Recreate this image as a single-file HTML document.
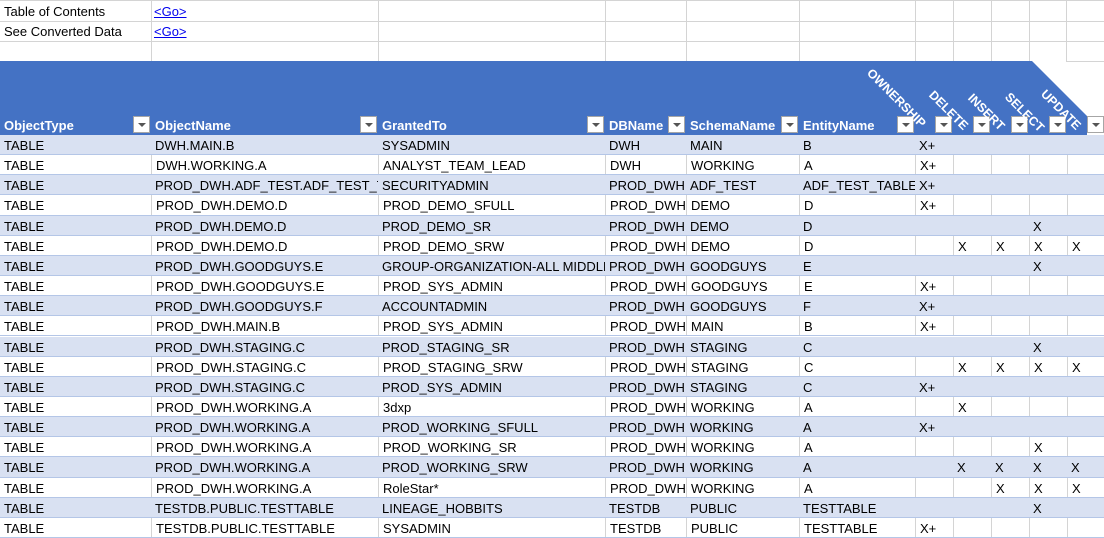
<!DOCTYPE html>
<html><head><meta charset="utf-8">
<style>
*{margin:0;padding:0;box-sizing:border-box}
body{width:1104px;height:537px;overflow:hidden;background:#fff;font-family:"Liberation Sans",sans-serif;font-size:13px;color:#000;position:relative}
.vl{position:absolute;top:0;width:1px;height:61px;background:#d4d4d4}
.hl{position:absolute;left:0;width:1104px;height:1px;background:#d4d4d4}
.t{position:absolute;line-height:20px;white-space:nowrap}
a{color:#0000ee;text-decoration:underline}
.row{position:absolute;left:0;width:1104px;height:20.15px;border-bottom:1px solid #b4c6e7}
.b{background:#d9e1f2}
.row>div{position:absolute;top:0;height:100%;line-height:21px;padding-left:4px;white-space:nowrap;overflow:hidden}
.row:not(.b)>div{border-left:1px solid #d4d4d4}
.c0{left:0;width:151px}.c1{left:151px;width:227px}.c2{left:378px;width:227px}.c3{left:605px;width:81px}.c4{left:686px;width:113px}.c5{left:799px;width:116px}.c6{left:915px;width:38px}.c7{left:953px;width:38px}.c8{left:991px;width:38px}.c9{left:1029px;width:38px}.c10{left:1067px;width:37px}
.row>div.c0{border-left:none!important}
.h{position:absolute;top:116px;color:#fff;font-weight:bold;line-height:19px}
.f{position:absolute;top:116px;width:17px;height:17px;background:#fff;border:1px solid #a6a6a6}
.f:after{content:"";position:absolute;left:4px;top:6px;border-left:4px solid transparent;border-right:4px solid transparent;border-top:4px solid #555}
.r{position:absolute;color:#fff;font-weight:bold;font-size:12.5px;transform:rotate(45deg);transform-origin:0 0;white-space:nowrap}
</style></head><body>
<div class="vl" style="left:151px"></div><div class="vl" style="left:378px"></div><div class="vl" style="left:605px"></div><div class="vl" style="left:686px"></div><div class="vl" style="left:799px"></div><div class="vl" style="left:915px"></div><div class="vl" style="left:953px"></div><div class="vl" style="left:991px"></div><div class="vl" style="left:1029px"></div><div class="vl" style="left:1066px;height:62px"></div>
<div class="hl" style="top:0"></div><div class="hl" style="top:21px"></div><div class="hl" style="top:41px"></div>
<div style="position:absolute;left:1066px;top:61px;width:38px;height:1px;background:#d4d4d4"></div>
<div class="t" style="left:4px;top:2px">Table of Contents</div>
<div class="t" style="left:154px;top:2px"><a>&lt;Go&gt;</a></div>
<div class="t" style="left:4px;top:22px">See Converted Data</div>
<div class="t" style="left:154px;top:22px"><a>&lt;Go&gt;</a></div>
<svg style="position:absolute;left:0;top:0" width="1104" height="537"><polygon points="0,61 1032,61 1087,116 1087,135 0,135" fill="#4472c4"/></svg>
<div class="h" style="left:4px">ObjectType</div><div class="f" style="left:133px"></div>
<div class="h" style="left:155px">ObjectName</div><div class="f" style="left:360px"></div>
<div class="h" style="left:382px">GrantedTo</div><div class="f" style="left:587px"></div>
<div class="h" style="left:609px">DBName</div><div class="f" style="left:668px"></div>
<div class="h" style="left:690px">SchemaName</div><div class="f" style="left:781px"></div>
<div class="h" style="left:803px">EntityName</div><div class="f" style="left:897px"></div>
<div class="f" style="left:935px"></div><div class="f" style="left:973px"></div><div class="f" style="left:1011px"></div><div class="f" style="left:1049px"></div><div class="f" style="left:1087px"></div>
<div class="r" style="left:874px;top:66px">OWNERSHIP</div>
<div class="r" style="left:936px;top:88px">DELETE</div>
<div class="r" style="left:975px;top:91px">INSERT</div>
<div class="r" style="left:1012px;top:90px">SELECT</div>
<div class="r" style="left:1048px;top:87px">UPDATE</div>

<div class="row b" style="top:135px"><div class="c0">TABLE</div><div class="c1">DWH.MAIN.B</div><div class="c2">SYSADMIN</div><div class="c3">DWH</div><div class="c4">MAIN</div><div class="c5">B</div><div class="c6">X+</div><div class="c7"></div><div class="c8"></div><div class="c9"></div><div class="c10"></div></div>
<div class="row" style="top:155.15px"><div class="c0">TABLE</div><div class="c1">DWH.WORKING.A</div><div class="c2">ANALYST_TEAM_LEAD</div><div class="c3">DWH</div><div class="c4">WORKING</div><div class="c5">A</div><div class="c6">X+</div><div class="c7"></div><div class="c8"></div><div class="c9"></div><div class="c10"></div></div>
<div class="row b" style="top:175.3px"><div class="c0">TABLE</div><div class="c1">PROD_DWH.ADF_TEST.ADF_TEST_TABLE</div><div class="c2">SECURITYADMIN</div><div class="c3">PROD_DWH</div><div class="c4">ADF_TEST</div><div class="c5">ADF_TEST_TABLE</div><div class="c6">X+</div><div class="c7"></div><div class="c8"></div><div class="c9"></div><div class="c10"></div></div>
<div class="row" style="top:195.45px"><div class="c0">TABLE</div><div class="c1">PROD_DWH.DEMO.D</div><div class="c2">PROD_DEMO_SFULL</div><div class="c3">PROD_DWH</div><div class="c4">DEMO</div><div class="c5">D</div><div class="c6">X+</div><div class="c7"></div><div class="c8"></div><div class="c9"></div><div class="c10"></div></div>
<div class="row b" style="top:215.6px"><div class="c0">TABLE</div><div class="c1">PROD_DWH.DEMO.D</div><div class="c2">PROD_DEMO_SR</div><div class="c3">PROD_DWH</div><div class="c4">DEMO</div><div class="c5">D</div><div class="c6"></div><div class="c7"></div><div class="c8"></div><div class="c9">X</div><div class="c10"></div></div>
<div class="row" style="top:235.75px"><div class="c0">TABLE</div><div class="c1">PROD_DWH.DEMO.D</div><div class="c2">PROD_DEMO_SRW</div><div class="c3">PROD_DWH</div><div class="c4">DEMO</div><div class="c5">D</div><div class="c6"></div><div class="c7">X</div><div class="c8">X</div><div class="c9">X</div><div class="c10">X</div></div>
<div class="row b" style="top:255.9px"><div class="c0">TABLE</div><div class="c1">PROD_DWH.GOODGUYS.E</div><div class="c2">GROUP-ORGANIZATION-ALL MIDDLE</div><div class="c3">PROD_DWH</div><div class="c4">GOODGUYS</div><div class="c5">E</div><div class="c6"></div><div class="c7"></div><div class="c8"></div><div class="c9">X</div><div class="c10"></div></div>
<div class="row" style="top:276.05px"><div class="c0">TABLE</div><div class="c1">PROD_DWH.GOODGUYS.E</div><div class="c2">PROD_SYS_ADMIN</div><div class="c3">PROD_DWH</div><div class="c4">GOODGUYS</div><div class="c5">E</div><div class="c6">X+</div><div class="c7"></div><div class="c8"></div><div class="c9"></div><div class="c10"></div></div>
<div class="row b" style="top:296.2px"><div class="c0">TABLE</div><div class="c1">PROD_DWH.GOODGUYS.F</div><div class="c2">ACCOUNTADMIN</div><div class="c3">PROD_DWH</div><div class="c4">GOODGUYS</div><div class="c5">F</div><div class="c6">X+</div><div class="c7"></div><div class="c8"></div><div class="c9"></div><div class="c10"></div></div>
<div class="row" style="top:316.35px"><div class="c0">TABLE</div><div class="c1">PROD_DWH.MAIN.B</div><div class="c2">PROD_SYS_ADMIN</div><div class="c3">PROD_DWH</div><div class="c4">MAIN</div><div class="c5">B</div><div class="c6">X+</div><div class="c7"></div><div class="c8"></div><div class="c9"></div><div class="c10"></div></div>
<div class="row b" style="top:336.5px"><div class="c0">TABLE</div><div class="c1">PROD_DWH.STAGING.C</div><div class="c2">PROD_STAGING_SR</div><div class="c3">PROD_DWH</div><div class="c4">STAGING</div><div class="c5">C</div><div class="c6"></div><div class="c7"></div><div class="c8"></div><div class="c9">X</div><div class="c10"></div></div>
<div class="row" style="top:356.65px"><div class="c0">TABLE</div><div class="c1">PROD_DWH.STAGING.C</div><div class="c2">PROD_STAGING_SRW</div><div class="c3">PROD_DWH</div><div class="c4">STAGING</div><div class="c5">C</div><div class="c6"></div><div class="c7">X</div><div class="c8">X</div><div class="c9">X</div><div class="c10">X</div></div>
<div class="row b" style="top:376.8px"><div class="c0">TABLE</div><div class="c1">PROD_DWH.STAGING.C</div><div class="c2">PROD_SYS_ADMIN</div><div class="c3">PROD_DWH</div><div class="c4">STAGING</div><div class="c5">C</div><div class="c6">X+</div><div class="c7"></div><div class="c8"></div><div class="c9"></div><div class="c10"></div></div>
<div class="row" style="top:396.95px"><div class="c0">TABLE</div><div class="c1">PROD_DWH.WORKING.A</div><div class="c2">3dxp</div><div class="c3">PROD_DWH</div><div class="c4">WORKING</div><div class="c5">A</div><div class="c6"></div><div class="c7">X</div><div class="c8"></div><div class="c9"></div><div class="c10"></div></div>
<div class="row b" style="top:417.1px"><div class="c0">TABLE</div><div class="c1">PROD_DWH.WORKING.A</div><div class="c2">PROD_WORKING_SFULL</div><div class="c3">PROD_DWH</div><div class="c4">WORKING</div><div class="c5">A</div><div class="c6">X+</div><div class="c7"></div><div class="c8"></div><div class="c9"></div><div class="c10"></div></div>
<div class="row" style="top:437.25px"><div class="c0">TABLE</div><div class="c1">PROD_DWH.WORKING.A</div><div class="c2">PROD_WORKING_SR</div><div class="c3">PROD_DWH</div><div class="c4">WORKING</div><div class="c5">A</div><div class="c6"></div><div class="c7"></div><div class="c8"></div><div class="c9">X</div><div class="c10"></div></div>
<div class="row b" style="top:457.4px"><div class="c0">TABLE</div><div class="c1">PROD_DWH.WORKING.A</div><div class="c2">PROD_WORKING_SRW</div><div class="c3">PROD_DWH</div><div class="c4">WORKING</div><div class="c5">A</div><div class="c6"></div><div class="c7">X</div><div class="c8">X</div><div class="c9">X</div><div class="c10">X</div></div>
<div class="row" style="top:477.55px"><div class="c0">TABLE</div><div class="c1">PROD_DWH.WORKING.A</div><div class="c2">RoleStar*</div><div class="c3">PROD_DWH</div><div class="c4">WORKING</div><div class="c5">A</div><div class="c6"></div><div class="c7"></div><div class="c8">X</div><div class="c9">X</div><div class="c10">X</div></div>
<div class="row b" style="top:497.7px"><div class="c0">TABLE</div><div class="c1">TESTDB.PUBLIC.TESTTABLE</div><div class="c2">LINEAGE_HOBBITS</div><div class="c3">TESTDB</div><div class="c4">PUBLIC</div><div class="c5">TESTTABLE</div><div class="c6"></div><div class="c7"></div><div class="c8"></div><div class="c9">X</div><div class="c10"></div></div>
<div class="row" style="top:517.85px"><div class="c0">TABLE</div><div class="c1">TESTDB.PUBLIC.TESTTABLE</div><div class="c2">SYSADMIN</div><div class="c3">TESTDB</div><div class="c4">PUBLIC</div><div class="c5">TESTTABLE</div><div class="c6">X+</div><div class="c7"></div><div class="c8"></div><div class="c9"></div><div class="c10"></div></div>
</body></html>
